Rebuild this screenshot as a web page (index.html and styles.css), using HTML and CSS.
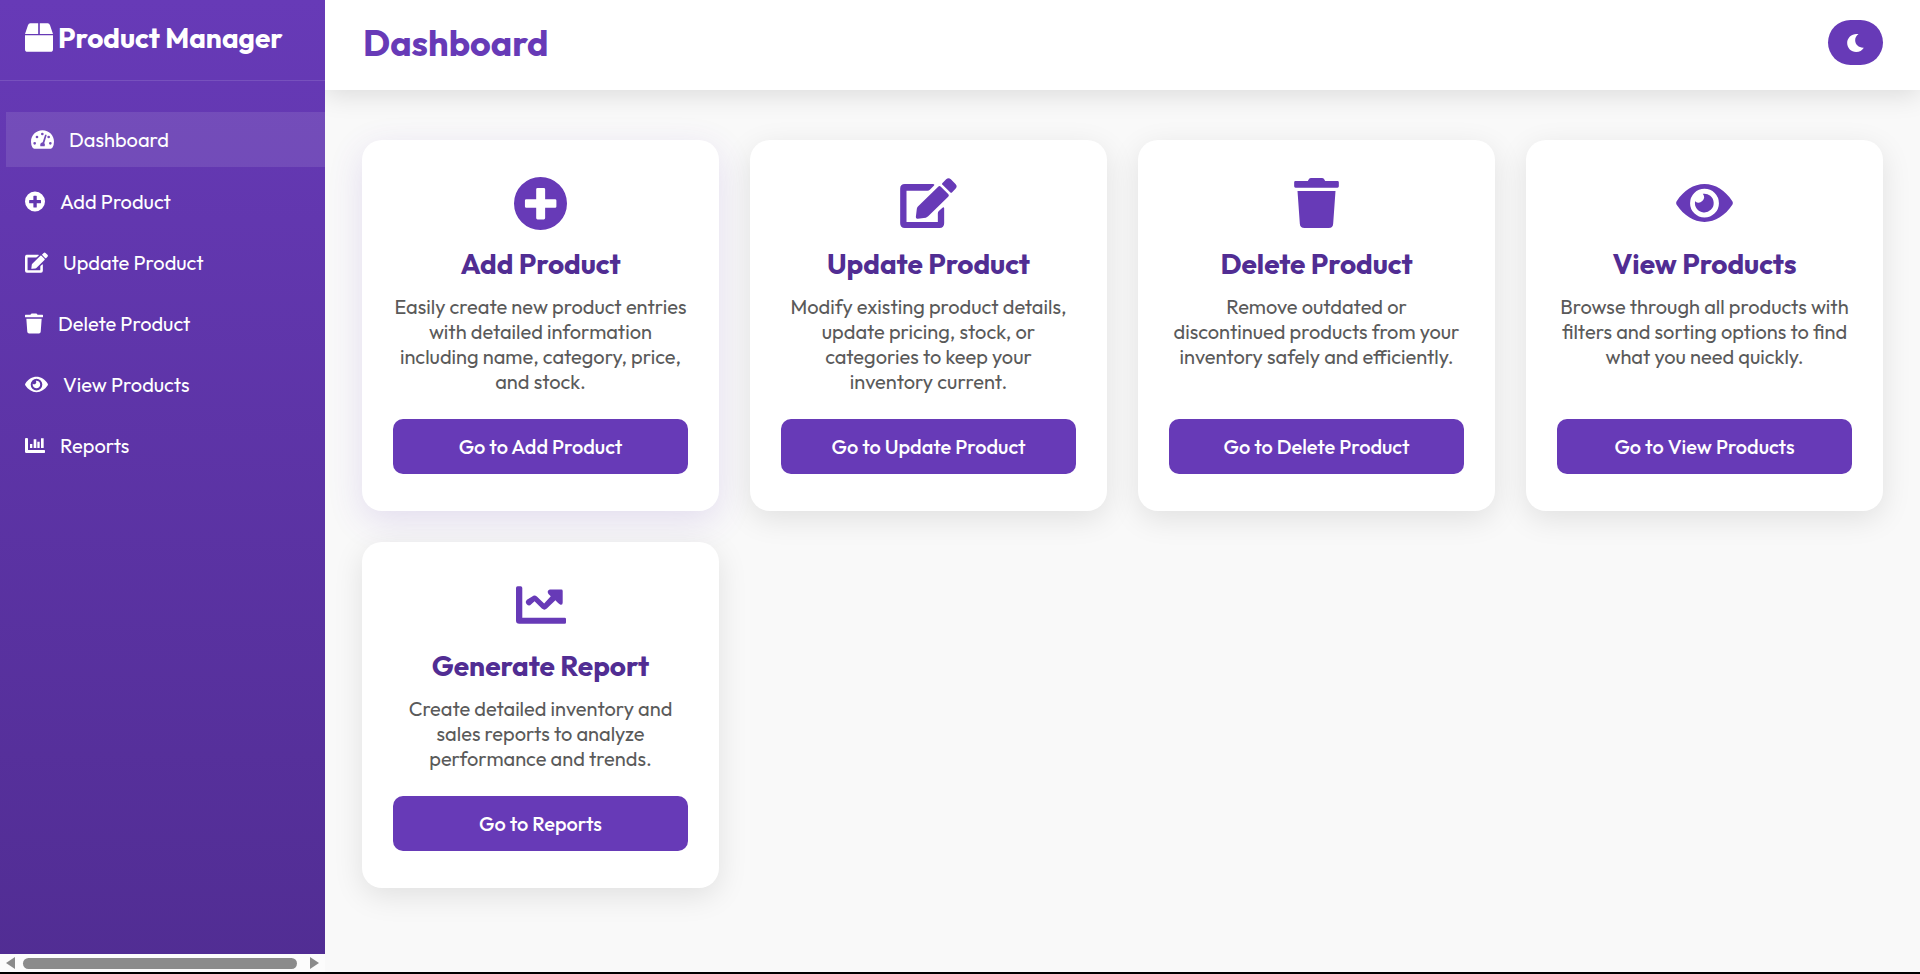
FILE: index.html
```html
<!DOCTYPE html>
<html lang="en">
<head>
<meta charset="utf-8">
<meta name="viewport" content="width=device-width, initial-scale=1">
<title>Product Manager</title>
<link rel="stylesheet" href="styles.css">
</head>
<body>
<svg class="sprite" aria-hidden="true">
  <symbol id="i-box" viewBox="0 0 85 87"><path d="M16 0H40V33H0L9 6Q11 0 16 0ZM45 0H69Q74 0 76 6L85 33H45ZM0 37H85V79Q85 87 77 87H8Q0 87 0 79Z"/></symbol>
  <symbol id="i-gauge" viewBox="0 0 69 55"><path fill-rule="evenodd" d="M34.500 0C15 0 0 15 0 34Q0 43 4 51Q6 55 10 55H59Q63 55 65 51Q69 43 69 34C69 15 54 0 34.500 0ZM11 35a4 4 0 1 1 0 8a4 4 0 1 1 0-8ZM18 16a4 4 0 1 1 0 8a4 4 0 1 1 0-8ZM34 7a4 4 0 1 1 0 8a4 4 0 1 1 0-8ZM58 35a4 4 0 1 1 0 8a4 4 0 1 1 0-8ZM53 16a4 4 0 1 1 0 8a4 4 0 1 1 0-8ZM42 14Q46 11 47 15L40 38Q43 42 41 48H28Q26 38 35 36Z"/></symbol>
  <symbol id="i-plus" viewBox="0 0 160 160"><path fill-rule="evenodd" d="M80 0a80 80 0 1 1 0 160a80 80 0 1 1 0-160ZM71 33Q67 33 67 37V67H37Q33 67 33 71V89Q33 93 37 93H67V124Q67 128 71 128H90Q94 128 94 124V93H124Q128 93 128 89V71Q128 67 124 67H94V37Q94 33 90 33Z"/></symbol>
  <symbol id="i-edit" viewBox="0 0 170 150"><path d="M98 18H14Q0 18 0 32V136Q0 150 14 150H118Q132 150 132 136V91Q132 86 127 89L116 99Q113 102 113 106V132H19V38H82Q86 38 89 35L101 23Q105 18 98 18ZM114 26Q118 22 122 26L144 48Q148 52 144 56L84 115Q81 118 77 119L53 122Q47 123 47 117L50 92Q51 88 54 85ZM127 15L138 4Q145-3 152 4L166 18Q173 25 166 32L156 43Q153 46 150 43L127 20Q124 18 127 15Z"/></symbol>
  <symbol id="i-trash" viewBox="0 0 134 150"><path d="M4 9H41L44 4Q46 0 51 0H83Q88 0 90 4L93 9H130Q134 9 134 13V25Q134 29 130 29H4Q0 29 0 25V13Q0 9 4 9ZM10 39H124L117 137Q116 150 104 150H31Q18 150 17 137Z"/></symbol>
  <symbol id="i-eye" viewBox="0 0 170 113"><path fill-rule="evenodd" d="M2 51C23 19 53 0 85 0S147 19 168 51Q171 56 168 62C147 94 117 113 85 113S23 94 2 62Q-1 56 2 51ZM85 14a43 43 0 1 0 0 86a43 43 0 1 0 0-86Z"/><path d="M80 29A28 28 0 1 1 57 51A16 16 0 0 0 80 29Z"/></symbol>
  <symbol id="i-line" viewBox="0 0 151 113"><path d="M5 0H14Q19 0 19 5V95H147Q151 95 151 99V109Q151 113 147 113H10Q0 113 0 103V5Q0 0 5 0ZM102 10H137Q141 10 141 14V49Q141 58 133 55Q130 53 119 42L93 67Q86 74 78 67L56 45L46 54Q40 62 33 55Q26 48 33 41L49 31Q56 24 63 31L85 52L105 30L98 23Q92 14 102 10Z"/></symbol>
  <symbol id="i-bars" viewBox="0 0 60 45"><path d="M0 3Q0 0 3 0H6Q9 0 9 3V36H58Q60 36 60 38V43Q60 45 58 45H4Q0 45 0 41ZM15 18H22V30H15ZM26 4H34V30H26ZM37 11H44V30H37ZM48 1H56V30H48Z"/></symbol>
  <symbol id="i-moon" viewBox="0 0 50 54"><path d="M34 1C17-3 0 10 0 27C0 42 12 54 27 54C37 54 45 49 50 41C36 42 24 33 24 19C24 11 28 5 34 1Z"/></symbol>
</svg>

<div class="app">
  <aside class="sidebar">
    <div class="brand"><svg class="brand-icon"><use href="#i-box"/></svg><span>Product Manager</span></div>
    <nav class="menu" aria-label="Main">
      <a class="menu-item active" href="#dashboard"><svg class="w23"><use href="#i-gauge"/></svg>Dashboard</a>
      <a class="menu-item" href="#add"><svg class="w20"><use href="#i-plus"/></svg>Add Product</a>
      <a class="menu-item" href="#update"><svg class="w23"><use href="#i-edit"/></svg>Update Product</a>
      <a class="menu-item" href="#delete"><svg class="w18"><use href="#i-trash"/></svg>Delete Product</a>
      <a class="menu-item" href="#view"><svg class="w23"><use href="#i-eye"/></svg>View Products</a>
      <a class="menu-item" href="#reports"><svg class="w20"><use href="#i-bars"/></svg>Reports</a>
    </nav>
    <div class="scrollbar" aria-hidden="true">
      <span class="arrow arrow-left"></span><span class="thumb"></span><span class="arrow arrow-right"></span>
    </div>
  </aside>

  <div class="content">
    <header class="topbar">
      <h1>Dashboard</h1>
      <button class="theme" type="button" aria-label="Toggle dark mode"><svg><use href="#i-moon"/></svg></button>
    </header>
    <main class="cards">
      <section class="card raised">
        <div class="card-icon"><svg class="i53"><use href="#i-plus"/></svg></div>
        <h2>Add Product</h2>
        <p>Easily create new product entries with detailed information including name, category, price, and stock.</p>
        <button type="button">Go to Add Product</button>
      </section>
      <section class="card">
        <div class="card-icon"><svg class="i57"><use href="#i-edit"/></svg></div>
        <h2>Update Product</h2>
        <p>Modify existing product details, update pricing, stock, or categories to keep your inventory current.</p>
        <button type="button">Go to Update Product</button>
      </section>
      <section class="card">
        <div class="card-icon"><svg class="i45"><use href="#i-trash"/></svg></div>
        <h2>Delete Product</h2>
        <p>Remove outdated or discontinued products from your inventory safely and efficiently.</p>
        <button type="button">Go to Delete Product</button>
      </section>
      <section class="card">
        <div class="card-icon"><svg class="i57"><use href="#i-eye"/></svg></div>
        <h2>View Products</h2>
        <p>Browse through all products with filters and sorting options to find what you need quickly.</p>
        <button type="button">Go to View Products</button>
      </section>
      <section class="card">
        <div class="card-icon"><svg class="i50"><use href="#i-line"/></svg></div>
        <h2>Generate Report</h2>
        <p>Create detailed inventory and sales reports to analyze performance and trends.</p>
        <button type="button">Go to Reports</button>
      </section>
    </main>
  </div>
</div>
</body>
</html>
```
FILE: styles.css
```css
:root {
  --primary: #673ab7;
  --primary-dark: #512d93;
}

* { box-sizing: border-box; }

body {
  margin: 0;
  background: #f9f9f9;
  font-family: Outfit, Lato, "Open Sans", sans-serif;
  font-size: 20px;
  line-height: 25px;
}

h1, h2, p { margin: 0; }

svg { fill: currentColor; flex: none; }

.sprite { position: absolute; width: 0; height: 0; }

button {
  border: 0;
  background: var(--primary);
  color: #fff;
  font: inherit;
  cursor: pointer;
}

.app {
  display: flex;
  min-height: 100vh;
  border-bottom: 2px solid #000;
}

/* Sidebar */
.sidebar {
  display: flex;
  flex-direction: column;
  flex: none;
  width: 325px;
  background: linear-gradient(180deg, var(--primary), var(--primary-dark));
  color: #fff;
}

.brand {
  display: flex;
  align-items: center;
  gap: 5px;
  height: 81px;
  padding: 0 25px 5px;
  border-bottom: 1px solid rgba(255, 255, 255, .12);
  font-size: 28px;
  font-weight: 700;
  white-space: nowrap;
}

.brand-icon { width: 28px; height: 29px; }

.menu {
  display: flex;
  flex-direction: column;
  flex: 1;
  gap: 6px;
  padding-top: 31px;
}

.menu-item {
  display: flex;
  align-items: center;
  gap: 15px;
  height: 55px;
  padding-left: 25px;
  color: #fff;
  text-decoration: none;
}

.menu-item.active {
  margin: 0 0 1px 6px;
  background: rgba(255, 255, 255, .1);
}

.menu-item svg { height: 21px; }
.menu-item .w18 { width: 18px; }
.menu-item .w20 { width: 20px; }
.menu-item .w23 { width: 23px; }

.scrollbar {
  display: flex;
  align-items: center;
  gap: 8px;
  height: 18px;
  padding: 0 6px;
  background: #fcfcfc;
}

.thumb {
  flex: 1;
  height: 11px;
  margin-right: 5px;
  border-radius: 6px;
  background: #8b8b8b;
}

.arrow {
  width: 9px;
  height: 12px;
  background: #8b8b8b;
}

.arrow-left { clip-path: polygon(0 50%, 100% 0, 100% 100%); }
.arrow-right { clip-path: polygon(0 0, 100% 50%, 0 100%); }

/* Content */
.content { flex: 1; min-width: 0; overflow: hidden; }

.topbar {
  display: flex;
  align-items: center;
  justify-content: space-between;
  height: 90px;
  padding: 0 37px 5px 38px;
  background: #fff;
  box-shadow: 0 5px 25px rgba(0, 0, 0, .12);
}

.topbar h1 {
  color: var(--primary);
  font-size: 36px;
  font-weight: 700;
  line-height: 48px;
}

.theme {
  display: flex;
  align-items: center;
  justify-content: center;
  width: 55px;
  height: 45px;
  border-radius: 25px;
}

.theme svg { width: 17px; height: 18px; }

.cards {
  display: grid;
  grid-template-columns: repeat(auto-fit, minmax(325px, 1fr));
  gap: 31px;
  padding: 50px 37px;
}

.card {
  display: flex;
  flex-direction: column;
  padding: 37px 31px;
  border-radius: 20px;
  background: #fff;
  box-shadow: 0 8px 30px rgba(0, 0, 0, .1);
  text-align: center;
}

.card.raised { box-shadow: 0 10px 35px rgba(103, 58, 183, .15); }

.card-icon {
  display: flex;
  align-items: center;
  justify-content: center;
  height: 52px;
  margin-bottom: 17px;
  color: var(--primary);
}

.card-icon svg { height: 50px; }
.card-icon .i45 { width: 45px; }
.card-icon .i50 { width: 50px; }
.card-icon .i53 { width: 53px; height: 53px; }
.card-icon .i57 { width: 57px; }

.card h2 {
  margin-bottom: 13px;
  color: var(--primary-dark);
  font-size: 28px;
  font-weight: 700;
  line-height: 35px;
}

.card p {
  flex: 1;
  margin-bottom: 25px;
  padding: 0 1px;
  color: #5a5a5a;
}

.card button {
  height: 55px;
  border-radius: 10px;
  font-weight: 500;
}
```
